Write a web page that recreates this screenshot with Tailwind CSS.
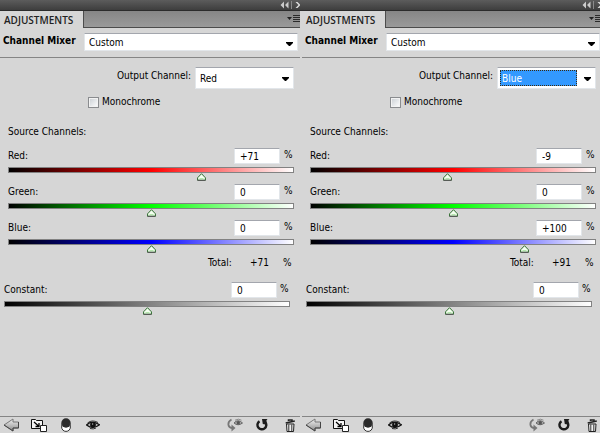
<!DOCTYPE html>
<html lang="en">
<head>
<meta charset="utf-8">
<title>Channel Mixer</title>
<script src="https://cdn.jsdelivr.net/npm/@tailwindcss/browser@4"></script>
</head>
<body class="bg-[#d6d6d6] text-black text-[10px] leading-3 font-['DejaVu_Sans_Condensed','DejaVu_Sans',sans-serif]">
<svg class="absolute w-0 h-0" aria-hidden="true">
  <defs>
    <linearGradient id="arrowFill" x1="0" y1="0" x2="0" y2="1"><stop offset="0" stop-color="#f2f2f2"/><stop offset="1" stop-color="#8c8c8c"/></linearGradient>
  </defs>
  <symbol id="collapse" viewBox="0 0 20 8"><path d="M4 .5v7L.5 4zM8.500.5v7L5 4z" fill="#ccc"/><path d="M11.500 0v8" stroke="#8a8a8a"/><path d="M15.500 1h2l3 3-3 3h-2l3-3z" fill="#ddd"/></symbol>
  <symbol id="menu" viewBox="0 0 13 10"><path d="M0 3h5L2.500 6z" fill="#222"/><path d="M6 1.500h7M6 3.500h7M6 5.500h7M6 7.500h7" stroke="#2a2a2a"/></symbol>
  <symbol id="caret" viewBox="0 0 7 4"><path d="M0 0h7v1L4 4H3L0 1z"/></symbol>
  <symbol id="thumb" viewBox="0 0 9 8"><path d="M4.500.7L8.400 4.800v2.400H.6V4.800z" fill="#f4fff0" stroke="#2c6b2c"/><path d="M.5 7.400h8" stroke="#555"/><path d="M2.500 5.500h4" stroke="#b5e8ae"/></symbol>
  <symbol id="back" viewBox="0 0 17 14"><path d="M1 7L10 1v3h5.500v6H10v3z" fill="url(#arrowFill)" stroke="#777"/><path d="M1 7l9 6v-3h5.500V4" fill="none" stroke="#444"/></symbol>
  <symbol id="expand" viewBox="0 0 16 14"><path d="M.5 10.500V1.500h4l1 1h6v8z" fill="#f5f5f5" stroke="#111"/><path d="M3 4l4.500 4M8 5v3.500H4.500" fill="none" stroke="#000" stroke-width="1.300"/><path d="M9.500 7.500h6v6h-6z" fill="#fff" stroke="#222"/></symbol>
  <symbol id="clip" viewBox="0 0 10 14"><circle cx="5" cy="9" r="4.400" fill="#fff" stroke="#333"/><circle cx="5" cy="5" r="4.700" fill="#2b2b2b"/><path d="M.7 5v4M9.300 5v4" stroke="#555"/></symbol>
  <symbol id="eye" viewBox="0 0 14 10"><path d="M.5 5Q6-.8 13.500 4.800 7 10 .5 5z" fill="#bbb" stroke="#111" stroke-width="1.200"/><path d="M1.500 3Q6-.8 12 2.500" fill="none" stroke="#333"/><circle cx="7" cy="4.800" r="2.900" fill="#111"/><path d="M6 4h1.200" stroke="#ddd"/><path d="M4 8.500q3.500 1 6-.5" fill="none" stroke="#333"/></symbol>
  <symbol id="previous" viewBox="0 0 16 14"><path d="M4.500 1.500C0 4 .5 9.500 5 10" fill="none" stroke="#777" stroke-width="1.800"/><path d="M4.500 6.500v7L8.500 10z" fill="#777"/><path d="M7 5Q11 .5 15.500 5 11 8.500 7 5z" fill="#aaa" stroke="#666"/><circle cx="11.300" cy="4.700" r="1.700" fill="#555"/><path d="M8 2.200q3.500-2 6.500 0" fill="none" stroke="#777" stroke-width=".8"/></symbol>
  <symbol id="reset" viewBox="0 0 12 12"><path d="M3.500 2.200A4.400 4.400 0 1 0 9.200 3" fill="none" stroke="#1c1c1c" stroke-width="2.400"/><path d="M6 0h5.500l-1 1.200v4.500L6.800 5z" fill="#1c1c1c"/></symbol>
  <symbol id="trash" viewBox="0 0 11 13"><path d="M3.500 2V1h3.500v1M.7 4L9.800 2" fill="none" stroke="#222" stroke-width="1.500"/><path d="M1.500 5h7.500l-.5 7.500h-6.500z" fill="#eee" stroke="#222"/><path d="M3.800 5.500v6.500M6.800 5.500v6.500" stroke="#333"/></symbol>
</svg>

<main class="grid grid-cols-2 min-h-screen overflow-hidden">

  <section class="flex flex-col min-w-0 overflow-hidden" aria-label="Adjustments, red output">
    <header class="flex h-[11px] items-center justify-end bg-linear-to-b from-[#5c5c5c] to-[#3e3e3e] border-b border-[#2b2b2b]">
      <button aria-label="Collapse panel"><svg class="block w-5 h-2"><use href="#collapse"/></svg></button>
    </header>
    <div class="flex h-[17px]">
      <h2 class="w-[83px] pl-1 pt-[3px] font-['Open_Sans',sans-serif] text-[10px] leading-3 font-semibold text-[#222] whitespace-nowrap">ADJUSTMENTS</h2>
      <div class="flex flex-1 justify-end items-center bg-linear-to-b from-[#868686] to-[#9a9a9a] border-l border-b border-[#4c4c4c]">
        <button aria-label="Panel menu"><svg class="block w-[13px] h-[10px]"><use href="#menu"/></svg></button>
      </div>
    </div>
    <div class="flex h-[30px] pt-[5px] pr-0.5 border-b border-[#858585]">
      <label for="preset-a" class="w-[84px] pl-[3px] pt-0.5 font-bold whitespace-nowrap">Channel Mixer</label>
      <div class="relative flex-1 h-[18px] bg-white border border-[#e2e6ea] border-t-[#a3a6ad]">
        <select id="preset-a" class="block w-full h-4 pl-1 pt-0.5 appearance-none bg-transparent outline-none"><option>Custom</option></select>
        <svg class="absolute right-1 top-2 w-[7px] h-1 pointer-events-none"><use href="#caret"/></svg>
      </div>
    </div>
    <div class="flex justify-end pt-[9px] pr-1.5">
      <label for="output-a" class="pt-[3px] pr-1 whitespace-nowrap">Output Channel:</label>
      <div class="relative w-[99px] h-[22px] bg-white border border-[#e2e6ea] border-t-[#a3a6ad]">
        <select id="output-a" class="block w-full h-5 pl-1 pt-0.5 appearance-none bg-transparent outline-none"><option>Red</option><option>Green</option><option>Blue</option></select>
        <svg class="absolute right-1 top-[9px] w-[7px] h-1 pointer-events-none"><use href="#caret"/></svg>
      </div>
    </div>
    <label class="flex items-center gap-[3px] h-3 mt-[7px] pl-[88px]">
      <input type="checkbox" class="appearance-none w-[11px] h-[11px] border border-[#8a8c8f] bg-linear-to-br from-[#c9ced3] to-white shadow-[inset_0_0_0_1px_#f2f2f2]">Monochrome
    </label>
    <h3 class="mt-[18px] pl-2">Source Channels:</h3>

    <div class="mt-2.5 pl-2 pr-1.5">
      <div class="h-9">
        <div class="flex h-[19px]">
          <label for="red-a" class="flex-1 pt-0.5">Red:</label>
          <input id="red-a" value="+71" class="w-[46px] h-4 mr-1 px-[5px] bg-white border border-[#e2e6ea] border-t-[#a3a6ad]"><span class="w-[10px] pt-px">%</span>
        </div>
        <div class="relative h-[6px] border border-[#828282] bg-linear-to-r/srgb from-black via-[#f00] to-white">
          <svg class="absolute top-[5px] -ml-1 w-[9px] h-2" style="left:67.75%"><use href="#thumb"/></svg>
          <input type="range" min="-200" max="200" value="71" aria-label="Red amount" class="absolute left-0 top-0 w-full h-3 opacity-0">
        </div>
      </div>
      <div class="h-9">
        <div class="flex h-[19px]">
          <label for="green-a" class="flex-1 pt-0.5">Green:</label>
          <input id="green-a" value="0" class="w-[46px] h-4 mr-1 px-[5px] bg-white border border-[#e2e6ea] border-t-[#a3a6ad]"><span class="w-[10px] pt-px">%</span>
        </div>
        <div class="relative h-[6px] border border-[#828282] bg-linear-to-r/srgb from-black via-[#0f0] to-white">
          <svg class="absolute top-[5px] -ml-1 w-[9px] h-2" style="left:50%"><use href="#thumb"/></svg>
          <input type="range" min="-200" max="200" value="0" aria-label="Green amount" class="absolute left-0 top-0 w-full h-3 opacity-0">
        </div>
      </div>
      <div class="h-9">
        <div class="flex h-[19px]">
          <label for="blue-a" class="flex-1 pt-0.5">Blue:</label>
          <input id="blue-a" value="0" class="w-[46px] h-4 mr-1 px-[5px] bg-white border border-[#e2e6ea] border-t-[#a3a6ad]"><span class="w-[10px] pt-px">%</span>
        </div>
        <div class="relative h-[6px] border border-[#828282] bg-linear-to-r/srgb from-black via-[#00f] to-white">
          <svg class="absolute top-[5px] -ml-1 w-[9px] h-2" style="left:50%"><use href="#thumb"/></svg>
          <input type="range" min="-200" max="200" value="0" aria-label="Blue amount" class="absolute left-0 top-0 w-full h-3 opacity-0">
        </div>
      </div>
      <div class="flex justify-end pt-px"><span class="w-[42px]">Total:</span><output class="w-[33px]">+71</output><span class="w-[11px]">%</span></div>
    </div>

    <div class="mt-[13px] pl-1 pr-2.5">
      <div class="flex h-[19px]">
        <label for="constant-a" class="flex-1 pt-0.5">Constant:</label>
        <input id="constant-a" value="0" class="w-[46px] h-4 mr-[3px] px-[5px] bg-white border border-[#e2e6ea] border-t-[#a3a6ad]"><span class="w-[10px] pt-px">%</span>
      </div>
      <div class="relative h-[6px] border border-[#828282] bg-linear-to-r/srgb from-black to-white">
        <svg class="absolute top-[5px] -ml-1 w-[9px] h-2" style="left:50%"><use href="#thumb"/></svg>
        <input type="range" min="-200" max="200" value="0" aria-label="Constant amount" class="absolute left-0 top-0 w-full h-3 opacity-0">
      </div>
    </div>

    <footer class="flex items-center h-[17px] mt-auto pl-[3px] pr-1 border-t border-[#858585]">
      <button aria-label="Back"><svg class="block w-[17px] h-3.5"><use href="#back"/></svg></button>
      <button aria-label="Expanded view" class="ml-[11px]"><svg class="block w-4 h-3.5"><use href="#expand"/></svg></button>
      <button aria-label="Clip to layer" class="ml-3.5"><svg class="block w-[10px] h-3.5"><use href="#clip"/></svg></button>
      <button aria-label="Toggle visibility" class="ml-[15px]"><svg class="block w-3.5 h-2.5"><use href="#eye"/></svg></button>
      <button aria-label="View previous state" class="ml-auto"><svg class="block w-4 h-3.5"><use href="#previous"/></svg></button>
      <button aria-label="Reset" class="ml-[13px]"><svg class="block w-3 h-3"><use href="#reset"/></svg></button>
      <button aria-label="Delete" class="ml-[17px]"><svg class="block w-[11px] h-[13px]"><use href="#trash"/></svg></button>
    </footer>
  </section>

  <section class="flex flex-col min-w-0 ml-0.5 -mr-0.5" aria-label="Adjustments, blue output">
    <header class="flex h-[11px] -ml-0.5 items-center justify-end bg-linear-to-b from-[#5c5c5c] to-[#3e3e3e] border-b border-[#2b2b2b]">
      <button aria-label="Collapse panel"><svg class="block w-5 h-2"><use href="#collapse"/></svg></button>
    </header>
    <div class="flex h-[17px]">
      <h2 class="w-[83px] pl-1 pt-[3px] font-['Open_Sans',sans-serif] text-[10px] leading-3 font-semibold text-[#222] whitespace-nowrap">ADJUSTMENTS</h2>
      <div class="flex flex-1 justify-end items-center bg-linear-to-b from-[#868686] to-[#9a9a9a] border-l border-b border-[#4c4c4c]">
        <button aria-label="Panel menu"><svg class="block w-[13px] h-[10px]"><use href="#menu"/></svg></button>
      </div>
    </div>
    <div class="flex h-[30px] pt-[5px] pr-0.5 border-b border-[#858585]">
      <label for="preset-b" class="w-[84px] pl-[3px] pt-0.5 font-bold whitespace-nowrap">Channel Mixer</label>
      <div class="relative flex-1 h-[18px] bg-white border border-[#e2e6ea] border-t-[#a3a6ad]">
        <select id="preset-b" class="block w-full h-4 pl-1 pt-0.5 appearance-none bg-transparent outline-none"><option>Custom</option></select>
        <svg class="absolute right-1 top-2 w-[7px] h-1 pointer-events-none"><use href="#caret"/></svg>
      </div>
    </div>
    <div class="flex justify-end pt-[9px] pr-1.5">
      <label for="output-b" class="pt-[3px] pr-1 whitespace-nowrap">Output Channel:</label>
      <div class="relative w-[99px] h-[22px] p-0.5 bg-white border border-[#e2e6ea] border-t-[#a3a6ad]">
        <select id="output-b" class="block w-[77px] h-4 pl-px pt-0.5 appearance-none bg-[#3399ff] text-white border border-dotted border-[#3a2a10] outline-none"><option>Blue</option><option>Red</option><option>Green</option></select>
        <svg class="absolute right-1 top-[9px] w-[7px] h-1 pointer-events-none"><use href="#caret"/></svg>
      </div>
    </div>
    <label class="flex items-center gap-[3px] h-3 mt-[7px] pl-[88px]">
      <input type="checkbox" class="appearance-none w-[11px] h-[11px] border border-[#8a8c8f] bg-linear-to-br from-[#c9ced3] to-white shadow-[inset_0_0_0_1px_#f2f2f2]">Monochrome
    </label>
    <h3 class="mt-[18px] pl-2">Source Channels:</h3>

    <div class="mt-2.5 pl-2 pr-1.5">
      <div class="h-9">
        <div class="flex h-[19px]">
          <label for="red-b" class="flex-1 pt-0.5">Red:</label>
          <input id="red-b" value="-9" class="w-[46px] h-4 mr-1 px-[5px] bg-white border border-[#e2e6ea] border-t-[#a3a6ad]"><span class="w-[10px] pt-px">%</span>
        </div>
        <div class="relative h-[6px] border border-[#828282] bg-linear-to-r/srgb from-black via-[#f00] to-white">
          <svg class="absolute top-[5px] -ml-1 w-[9px] h-2" style="left:47.75%"><use href="#thumb"/></svg>
          <input type="range" min="-200" max="200" value="-9" aria-label="Red amount" class="absolute left-0 top-0 w-full h-3 opacity-0">
        </div>
      </div>
      <div class="h-9">
        <div class="flex h-[19px]">
          <label for="green-b" class="flex-1 pt-0.5">Green:</label>
          <input id="green-b" value="0" class="w-[46px] h-4 mr-1 px-[5px] bg-white border border-[#e2e6ea] border-t-[#a3a6ad]"><span class="w-[10px] pt-px">%</span>
        </div>
        <div class="relative h-[6px] border border-[#828282] bg-linear-to-r/srgb from-black via-[#0f0] to-white">
          <svg class="absolute top-[5px] -ml-1 w-[9px] h-2" style="left:50%"><use href="#thumb"/></svg>
          <input type="range" min="-200" max="200" value="0" aria-label="Green amount" class="absolute left-0 top-0 w-full h-3 opacity-0">
        </div>
      </div>
      <div class="h-9">
        <div class="flex h-[19px]">
          <label for="blue-b" class="flex-1 pt-0.5">Blue:</label>
          <input id="blue-b" value="+100" class="w-[46px] h-4 mr-1 px-[5px] bg-white border border-[#e2e6ea] border-t-[#a3a6ad]"><span class="w-[10px] pt-px">%</span>
        </div>
        <div class="relative h-[6px] border border-[#828282] bg-linear-to-r/srgb from-black via-[#00f] to-white">
          <svg class="absolute top-[5px] -ml-1 w-[9px] h-2" style="left:75%"><use href="#thumb"/></svg>
          <input type="range" min="-200" max="200" value="100" aria-label="Blue amount" class="absolute left-0 top-0 w-full h-3 opacity-0">
        </div>
      </div>
      <div class="flex justify-end pt-px"><span class="w-[42px]">Total:</span><output class="w-[33px]">+91</output><span class="w-[11px]">%</span></div>
    </div>

    <div class="mt-[13px] pl-1 pr-2.5">
      <div class="flex h-[19px]">
        <label for="constant-b" class="flex-1 pt-0.5">Constant:</label>
        <input id="constant-b" value="0" class="w-[46px] h-4 mr-[3px] px-[5px] bg-white border border-[#e2e6ea] border-t-[#a3a6ad]"><span class="w-[10px] pt-px">%</span>
      </div>
      <div class="relative h-[6px] border border-[#828282] bg-linear-to-r/srgb from-black to-white">
        <svg class="absolute top-[5px] -ml-1 w-[9px] h-2" style="left:50%"><use href="#thumb"/></svg>
        <input type="range" min="-200" max="200" value="0" aria-label="Constant amount" class="absolute left-0 top-0 w-full h-3 opacity-0">
      </div>
    </div>

    <footer class="flex items-center h-[17px] mt-auto pl-[3px] pr-1 border-t border-[#858585]">
      <button aria-label="Back"><svg class="block w-[17px] h-3.5"><use href="#back"/></svg></button>
      <button aria-label="Expanded view" class="ml-[11px]"><svg class="block w-4 h-3.5"><use href="#expand"/></svg></button>
      <button aria-label="Clip to layer" class="ml-3.5"><svg class="block w-[10px] h-3.5"><use href="#clip"/></svg></button>
      <button aria-label="Toggle visibility" class="ml-[15px]"><svg class="block w-3.5 h-2.5"><use href="#eye"/></svg></button>
      <button aria-label="View previous state" class="ml-auto"><svg class="block w-4 h-3.5"><use href="#previous"/></svg></button>
      <button aria-label="Reset" class="ml-[13px]"><svg class="block w-3 h-3"><use href="#reset"/></svg></button>
      <button aria-label="Delete" class="ml-[17px]"><svg class="block w-[11px] h-[13px]"><use href="#trash"/></svg></button>
    </footer>
  </section>
</main>
</body>
</html>
